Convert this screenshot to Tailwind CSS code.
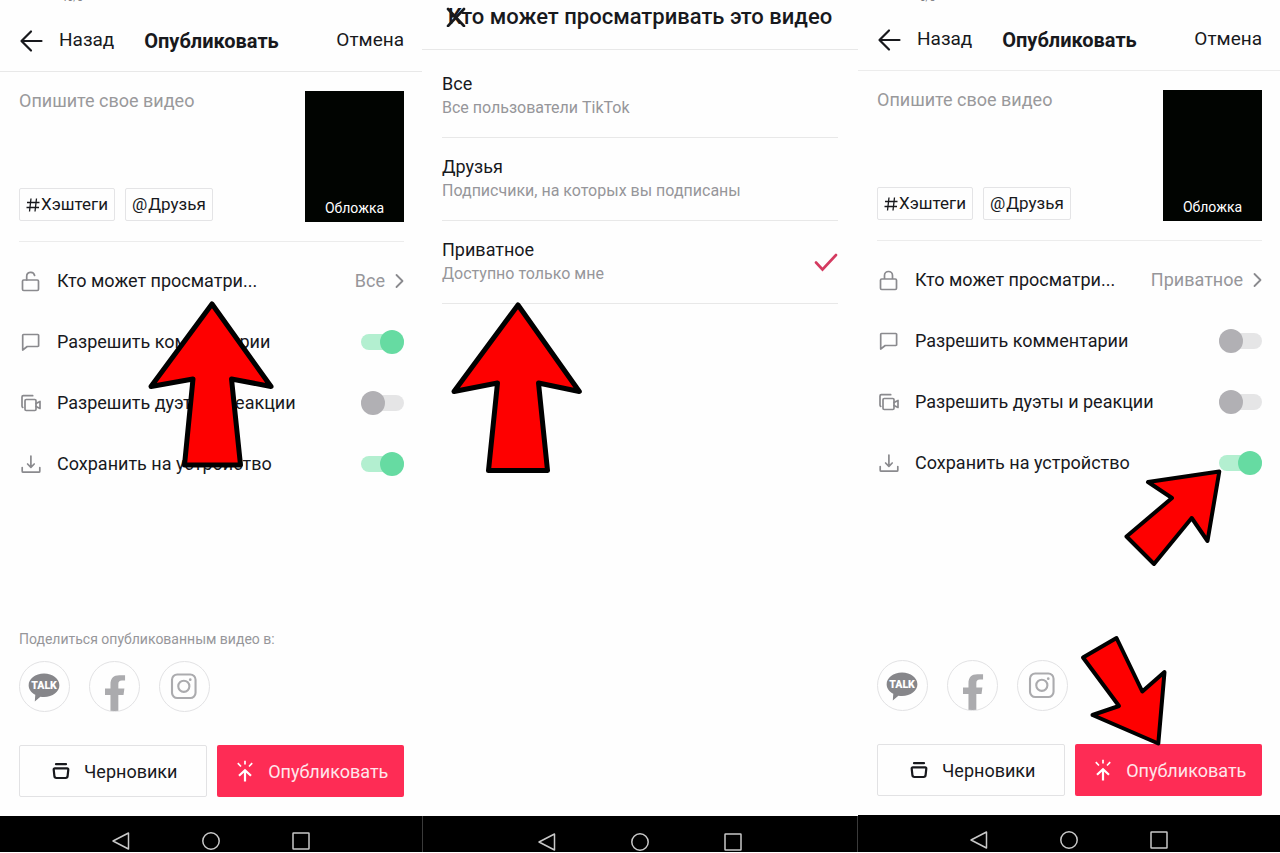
<!DOCTYPE html>
<html lang="ru">
<head>
	<meta charset="UTF-8" />
	<meta name="viewport" content="width=device-width, initial-scale=1.0" />
	<title>Опубликовать видео</title>
	<script src="https://cdn.jsdelivr.net/npm/@tailwindcss/browser@4"></script>
</head>
<body class="bg-[#fefefe] font-[Roboto,sans-serif] text-[#18191d]">
	<!-- Icons -->
	<svg class="hidden" aria-hidden="true">
		<symbol id="back" viewBox="0 0 24 24"><path d="M22.500 12H3M12 2.500 2.500 12l9.500 9.500" fill="none" stroke="currentColor" stroke-width="2.200" stroke-linecap="round" stroke-linejoin="round"/></symbol>
		<symbol id="unlock" viewBox="0 0 24 24"><g fill="none" stroke="currentColor" stroke-width="1.7" stroke-linecap="round"><rect x="3.5" y="11" width="16" height="10.5" rx="1.2"/><path d="M7.7 11V7.5a4 4 0 0 1 7.9-1"/></g></symbol>
		<symbol id="lock" viewBox="0 0 24 24"><g fill="none" stroke="currentColor" stroke-width="1.7"><rect x="3.5" y="11" width="16" height="10.5" rx="1.2"/><path d="M7.5 11V7.5a4 4 0 0 1 8 0V11"/></g></symbol>
		<symbol id="comment" viewBox="0 0 24 24"><path d="M4.5 4.5h14.3a.8.8 0 0 1 .8.8v10.4a.8.8 0 0 1-.8.8H8.2L3.7 20V5.3a.8.8 0 0 1 .8-.8z" fill="none" stroke="currentColor" stroke-width="1.7" stroke-linejoin="round"/></symbol>
		<symbol id="duet" viewBox="0 0 24 24"><g fill="none" stroke="currentColor" stroke-width="1.7" stroke-linejoin="round" stroke-linecap="round"><path d="M13.7 4.700H4.300A1.300 1.300 0 0 0 3 6v9a1.500 1.500 0 0 0 .8 1.400"/><rect x="6" y="8.500" width="11" height="11" rx="1.200"/><path d="m17 12.500 4-2v7l-4-2"/></g></symbol>
		<symbol id="download" viewBox="0 0 24 24"><path d="M11.9 4v11M8.6 12l3.3 3.3 3.3-3.3M3.2 15.5v3.7c0 .6.4 1 1 1h15.6c.6 0 1-.4 1-1v-3.7" fill="none" stroke="currentColor" stroke-width="1.7" stroke-linecap="round" stroke-linejoin="round"/></symbol>
		<symbol id="chevron" viewBox="0 0 9 16"><path d="m1.5 2 6 6-6 6" fill="none" stroke="currentColor" stroke-width="1.8" stroke-linecap="round" stroke-linejoin="round"/></symbol>
		<symbol id="hash" viewBox="0 0 14 16"><path d="M5 1.5 3.5 14.5M10.5 1.5 9 14.5M1 5.5h12.5M.5 10.5H13" fill="none" stroke="currentColor" stroke-width="1.3"/></symbol>
		<symbol id="talk" viewBox="0 0 51 51"><path d="M25 12c9 0 16 5.400 16 12.200s-7 12.200-16 12.200q-2 0-3.800-.3L15.400 41l.5-6.800c-4.200-2.200-6.900-5.800-6.900-10C9 17.400 16 12 25 12z" fill="#86868a"/><text x="25" y="28" text-anchor="middle" font-family="Roboto" font-size="11" font-weight="900" fill="#fff">TALK</text></symbol>
		<symbol id="facebook" viewBox="0 0 51 51"><path d="M21.300 51V34.300h-5.700v-6.600h5.700v-4.500c0-6.300 3.200-9.500 9.200-9.500h6v5.600h-3.200c-2.800 0-3.800 1.200-3.800 3.900v4.500h6.300l-.9 6.600h-5.400V51z" fill="#ababae"/></symbol>
		<symbol id="instagram" viewBox="0 0 51 51"><g fill="none" stroke="#ababae" stroke-width="2.200"><rect x="12.500" y="13" width="24.500" height="24.500" rx="5.500"/><circle cx="24.800" cy="25.300" r="5.800"/></g><circle cx="31.500" cy="18.400" r="1.400" fill="#ababae"/></symbol>
		<symbol id="drafts" viewBox="0 0 18 18"><path d="M4 2.200h10M2.800 6.400h12.400c.7 0 1.200.5 1.100 1.200l-.7 6.600a2 2 0 0 1-2 1.800H4.400a2 2 0 0 1-2-1.800l-.7-6.600c-.1-.7.4-1.200 1.100-1.200z" fill="none" stroke="currentColor" stroke-width="2.200" stroke-linecap="round" stroke-linejoin="round"/></symbol>
		<symbol id="publish" viewBox="0 0 18 22"><g fill="none" stroke="currentColor"><path d="M9 21.500V11M3 15.800l6-5.600 6 5.600" stroke-width="2.200"/><path d="M9 .8v3.700M1.800 3.200l3.200 3.300M16.200 3.200 13 6.500" stroke-width="1.700"/></g></symbol>
		<symbol id="nav-back" viewBox="0 0 18 18"><path d="M16.500 1v16L1 9z" fill="none" stroke="currentColor" stroke-width="1.500" stroke-linejoin="round"/></symbol>
		<symbol id="nav-home" viewBox="0 0 18 18"><circle cx="9" cy="9" r="8.200" fill="none" stroke="currentColor" stroke-width="1.500"/></symbol>
		<symbol id="nav-recent" viewBox="0 0 18 18"><rect x="1" y="1" width="16" height="16" rx=".5" fill="none" stroke="currentColor" stroke-width="1.500"/></symbol>
	</svg>

	<div class="grid grid-cols-[422fr_436fr_422fr] min-h-screen pb-px">

		<!-- Step 1: publish screen -->
		<section class="relative flex flex-col">
			<div class="h-2 overflow-hidden pl-[62px]"><div class="-mt-2 text-[10px] leading-3 text-[#77777b]">10/8</div></div>
			<header class="grid grid-cols-[1fr_auto_1fr] items-center h-16 pt-[2px] pl-[19px] pr-[18px] border-b border-[#e8e8e8] text-[19px]">
				<button class="flex items-center gap-4"><svg class="size-6"><use href="#back"/></svg>Назад</button>
				<h1 class="font-bold text-[20px]">Опубликовать</h1>
				<button class="justify-self-end">Отмена</button>
			</header>

			<main class="grow flex flex-col pl-[19px] pr-[18px] pb-[19px]">
				<div class="flex justify-between pt-[19px] pb-[19px] border-b border-[#ececec]">
					<div class="flex flex-col justify-between pb-px">
						<textarea aria-label="Опишите свое видео" placeholder="Опишите свое видео" class="w-60 h-16 resize-none outline-none text-[18px] leading-5 placeholder:text-[#99999b]"></textarea>
						<div class="flex gap-[10px] text-[17px]">
							<button class="flex items-center gap-px h-[33px] px-[6px] border border-[#e4e4e6] rounded-xs"><svg class="w-[14px] h-4"><use href="#hash"/></svg>Хэштеги</button>
							<button class="flex items-center gap-px h-[33px] px-[6px] border border-[#e4e4e6] rounded-xs"><span>@</span>Друзья</button>
						</div>
					</div>
					<button class="flex items-end justify-center w-[99px] h-[131px] pb-[3px] bg-[#010401] text-white text-[14px]">Обложка</button>
				</div>

				<div class="pt-2 text-[18px]">
					<button class="flex items-center gap-[14px] w-full h-[61px]">
						<svg class="size-6 text-[#8a8a8e]"><use href="#unlock"/></svg>
						<span>Кто может просматри...</span>
						<span class="ml-auto flex items-center gap-[10px] text-[#96969a]">Все<svg class="w-[9px] h-4 text-[#8a8a8e]"><use href="#chevron"/></svg></span>
					</button>
					<label class="flex items-center gap-[14px] h-[61px]">
						<svg class="size-6 text-[#8a8a8e]"><use href="#comment"/></svg>
						<span>Разрешить комментарии</span>
						<input type="checkbox" checked class="ml-auto appearance-none relative w-[43px] h-6 before:absolute before:inset-x-0 before:inset-y-1 before:rounded-full before:bg-[#e5e5e6] checked:before:bg-[#b3efd0] after:absolute after:left-0 after:top-0 after:size-6 after:rounded-full after:bg-[#b1b0b4] checked:after:left-auto checked:after:right-0 checked:after:bg-[#66dba2]" />
					</label>
					<label class="flex items-center gap-[14px] h-[61px]">
						<svg class="size-6 text-[#8a8a8e]"><use href="#duet"/></svg>
						<span>Разрешить дуэты и реакции</span>
						<input type="checkbox" class="ml-auto appearance-none relative w-[43px] h-6 before:absolute before:inset-x-0 before:inset-y-1 before:rounded-full before:bg-[#e5e5e6] checked:before:bg-[#b3efd0] after:absolute after:left-0 after:top-0 after:size-6 after:rounded-full after:bg-[#b1b0b4] checked:after:left-auto checked:after:right-0 checked:after:bg-[#66dba2]" />
					</label>
					<label class="flex items-center gap-[14px] h-[61px]">
						<svg class="size-6 text-[#8a8a8e]"><use href="#download"/></svg>
						<span>Сохранить на устройство</span>
						<input type="checkbox" checked class="ml-auto appearance-none relative w-[43px] h-6 before:absolute before:inset-x-0 before:inset-y-1 before:rounded-full before:bg-[#e5e5e6] checked:before:bg-[#b3efd0] after:absolute after:left-0 after:top-0 after:size-6 after:rounded-full after:bg-[#b1b0b4] checked:after:left-auto checked:after:right-0 checked:after:bg-[#66dba2]" />
					</label>
				</div>

				<p class="mt-auto mb-3 text-[14px] leading-5 text-[#96969a]">Поделиться опубликованным видео в:</p>
				<div class="flex gap-[19px] mb-[33px]">
					<button aria-label="KakaoTalk" class="size-[51px] border border-[#e2e2e4] rounded-full overflow-hidden"><svg class="size-full"><use href="#talk"/></svg></button>
					<button aria-label="Facebook" class="size-[51px] border border-[#e2e2e4] rounded-full overflow-hidden"><svg class="size-full"><use href="#facebook"/></svg></button>
					<button aria-label="Instagram" class="size-[51px] border border-[#e2e2e4] rounded-full overflow-hidden"><svg class="size-full"><use href="#instagram"/></svg></button>
				</div>
				<div class="grid grid-cols-2 gap-[10px] text-[18px]">
					<button class="flex items-center justify-center gap-[14px] h-[52px] pl-1 border border-[#e2e2e4] rounded-xs"><svg class="size-[18px]"><use href="#drafts"/></svg>Черновики</button>
					<button class="flex items-center justify-center gap-[14px] h-[52px] pl-1 rounded-xs bg-[#fe2c55] text-[#ffe6eb]"><svg class="w-[18px] h-[22px] text-white"><use href="#publish"/></svg>Опубликовать</button>
				</div>
			</main>

			<nav class="flex justify-center gap-[72px] h-9 pt-4 bg-black text-[#c8c8c8]">
				<button aria-label="Назад" class="size-[18px]"><svg class="size-full"><use href="#nav-back"/></svg></button>
				<button aria-label="Домой" class="size-[18px]"><svg class="size-full"><use href="#nav-home"/></svg></button>
				<button aria-label="Недавние" class="size-[18px]"><svg class="size-full"><use href="#nav-recent"/></svg></button>
			</nav>

			<svg class="absolute left-0 top-0 w-[422px] h-[560px] pointer-events-none" viewBox="0 0 422 560"><path d="M212 304 271 386.500 231.500 379 240.500 465h-56L193 379 151 386.500z" fill="#fe0000" stroke="#000" stroke-width="5" stroke-linejoin="round"/></svg>
		</section>

		<!-- Step 2: privacy -->
		<section class="relative flex flex-col">
			<header class="relative h-[50px] pt-1 border-b border-[#e8e8e8]">
				<h2 class="text-center text-[22px] leading-[26px] font-medium">Кто может просматривать это видео</h2>
				<button aria-label="Закрыть" class="absolute left-6 top-[7px] size-5"><svg class="size-full" viewBox="0 0 20 20"><path d="m2 2 16 17M18 2 2 19" fill="none" stroke="currentColor" stroke-width="2.600" stroke-linecap="round"/></svg></button>
			</header>

			<main class="grow px-5 pt-[5px]">
				<label class="block py-[17px] border-b border-[#e8e8e8]">
					<input type="radio" name="privacy" class="sr-only" />
					<span class="block text-[18px] leading-6">Все</span>
					<span class="block text-[16px] leading-6 text-[#96969a]">Все пользователи TikTok</span>
				</label>
				<label class="block py-[17px] border-b border-[#e8e8e8]">
					<input type="radio" name="privacy" class="sr-only" />
					<span class="block text-[18px] leading-6">Друзья</span>
					<span class="block text-[16px] leading-6 text-[#96969a]">Подписчики, на которых вы подписаны</span>
				</label>
				<label class="flex items-center justify-between py-[17px] border-b border-[#e8e8e8]">
					<input type="radio" name="privacy" checked class="sr-only" />
					<span>
						<span class="block text-[18px] leading-6">Приватное</span>
						<span class="block text-[16px] leading-6 text-[#96969a]">Доступно только мне</span>
					</span>
					<svg class="w-6 h-5" viewBox="0 0 24 20"><path d="m2 10.500 6.500 7L22 3" fill="none" stroke="#d43a60" stroke-width="2.600" stroke-linecap="round"/></svg>
				</label>
			</main>

			<nav class="flex justify-center gap-[75px] h-9 pt-[17px] bg-black text-[#c8c8c8] border-x border-[#3a3a3a]">
				<button aria-label="Назад" class="size-[18px]"><svg class="size-full"><use href="#nav-back"/></svg></button>
				<button aria-label="Домой" class="size-[18px]"><svg class="size-full"><use href="#nav-home"/></svg></button>
				<button aria-label="Недавние" class="size-[18px]"><svg class="size-full"><use href="#nav-recent"/></svg></button>
			</nav>

			<svg class="absolute left-0 top-0 w-[422px] h-[560px] pointer-events-none" viewBox="0 0 422 560"><path d="M96 305 157.300 391.500 116.500 383 125.500 470.500h-59L75.500 383 32 391.500z" fill="#fe0000" stroke="#000" stroke-width="5" stroke-linejoin="round"/></svg>
		</section>

		<!-- Step 3: publish screen, private video -->
		<section class="relative flex flex-col">
			<div class="h-[7px] overflow-hidden pl-[62px]"><div class="-mt-2 text-[10px] leading-3 text-[#77777b]">0/8</div></div>
			<header class="grid grid-cols-[1fr_auto_1fr] items-center h-16 pt-[2px] pl-[19px] pr-[18px] border-b border-[#ececec] text-[19px]">
				<button class="flex items-center gap-4"><svg class="size-6"><use href="#back"/></svg>Назад</button>
				<h2 class="font-bold text-[20px]">Опубликовать</h2>
				<button class="justify-self-end">Отмена</button>
			</header>

			<main class="grow flex flex-col pl-[19px] pr-[18px] pb-[19px]">
				<div class="flex justify-between pt-[19px] pb-[19px] border-b border-[#ececec]">
					<div class="flex flex-col justify-between pb-px">
						<textarea aria-label="Опишите свое видео" placeholder="Опишите свое видео" class="w-60 h-16 resize-none outline-none text-[18px] leading-5 placeholder:text-[#99999b]"></textarea>
						<div class="flex gap-[10px] text-[17px]">
							<button class="flex items-center gap-px h-[33px] px-[6px] border border-[#e4e4e6] rounded-xs"><svg class="w-[14px] h-4"><use href="#hash"/></svg>Хэштеги</button>
							<button class="flex items-center gap-px h-[33px] px-[6px] border border-[#e4e4e6] rounded-xs"><span>@</span>Друзья</button>
						</div>
					</div>
					<button class="flex items-end justify-center w-[99px] h-[131px] pb-[3px] bg-[#010401] text-white text-[14px]">Обложка</button>
				</div>

				<div class="pt-2 text-[18px]">
					<button class="flex items-center gap-[14px] w-full h-[61px]">
						<svg class="size-6 text-[#8a8a8e]"><use href="#lock"/></svg>
						<span>Кто может просматри...</span>
						<span class="ml-auto flex items-center gap-[10px] text-[#96969a]">Приватное<svg class="w-[9px] h-4 text-[#8a8a8e]"><use href="#chevron"/></svg></span>
					</button>
					<label class="flex items-center gap-[14px] h-[61px]">
						<svg class="size-6 text-[#8a8a8e]"><use href="#comment"/></svg>
						<span>Разрешить комментарии</span>
						<input type="checkbox" class="ml-auto appearance-none relative w-[43px] h-6 before:absolute before:inset-x-0 before:inset-y-1 before:rounded-full before:bg-[#e5e5e6] checked:before:bg-[#b3efd0] after:absolute after:left-0 after:top-0 after:size-6 after:rounded-full after:bg-[#b1b0b4] checked:after:left-auto checked:after:right-0 checked:after:bg-[#66dba2]" />
					</label>
					<label class="flex items-center gap-[14px] h-[61px]">
						<svg class="size-6 text-[#8a8a8e]"><use href="#duet"/></svg>
						<span>Разрешить дуэты и реакции</span>
						<input type="checkbox" class="ml-auto appearance-none relative w-[43px] h-6 before:absolute before:inset-x-0 before:inset-y-1 before:rounded-full before:bg-[#e5e5e6] checked:before:bg-[#b3efd0] after:absolute after:left-0 after:top-0 after:size-6 after:rounded-full after:bg-[#b1b0b4] checked:after:left-auto checked:after:right-0 checked:after:bg-[#66dba2]" />
					</label>
					<label class="flex items-center gap-[14px] h-[61px]">
						<svg class="size-6 text-[#8a8a8e]"><use href="#download"/></svg>
						<span>Сохранить на устройство</span>
						<input type="checkbox" checked class="ml-auto appearance-none relative w-[43px] h-6 before:absolute before:inset-x-0 before:inset-y-1 before:rounded-full before:bg-[#e5e5e6] checked:before:bg-[#b3efd0] after:absolute after:left-0 after:top-0 after:size-6 after:rounded-full after:bg-[#b1b0b4] checked:after:left-auto checked:after:right-0 checked:after:bg-[#66dba2]" />
					</label>
				</div>

				<div class="flex gap-[19px] mt-auto mb-[33px]">
					<button aria-label="KakaoTalk" class="size-[51px] border border-[#e2e2e4] rounded-full overflow-hidden"><svg class="size-full"><use href="#talk"/></svg></button>
					<button aria-label="Facebook" class="size-[51px] border border-[#e2e2e4] rounded-full overflow-hidden"><svg class="size-full"><use href="#facebook"/></svg></button>
					<button aria-label="Instagram" class="size-[51px] border border-[#e2e2e4] rounded-full overflow-hidden"><svg class="size-full"><use href="#instagram"/></svg></button>
				</div>
				<div class="grid grid-cols-2 gap-[10px] text-[18px]">
					<button class="flex items-center justify-center gap-[14px] h-[52px] pl-1 border border-[#e2e2e4] rounded-xs"><svg class="size-[18px]"><use href="#drafts"/></svg>Черновики</button>
					<button class="flex items-center justify-center gap-[14px] h-[52px] pl-1 rounded-xs bg-[#fe2c55] text-[#ffe6eb]"><svg class="w-[18px] h-[22px] text-white"><use href="#publish"/></svg>Опубликовать</button>
				</div>
			</main>

			<nav class="flex justify-center gap-[72px] h-[37px] pt-4 bg-black text-[#c8c8c8]">
				<button aria-label="Назад" class="size-[18px]"><svg class="size-full"><use href="#nav-back"/></svg></button>
				<button aria-label="Домой" class="size-[18px]"><svg class="size-full"><use href="#nav-home"/></svg></button>
				<button aria-label="Недавние" class="size-[18px]"><svg class="size-full"><use href="#nav-recent"/></svg></button>
			</nav>

			<svg class="absolute left-0 top-0 w-[422px] h-[760px] pointer-events-none" viewBox="0 0 422 760"><g fill="#fe0000" stroke="#000" stroke-width="4" stroke-linejoin="round"><path d="M361.300 471.500 349.500 541 333.700 518 296 564 268.500 536.500 314 498 290 482z"/><path d="M300.300 743.500 306.500 672 284.300 691.500 258.500 638 225 657.500 261 706 234.500 715z"/></g></svg>
		</section>
	</div>
</body>
</html>
